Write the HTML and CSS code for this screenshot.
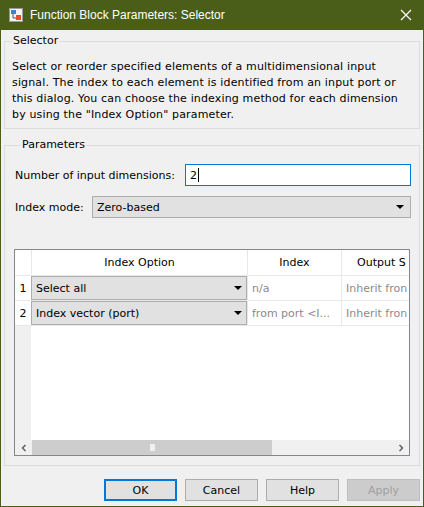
FILE: index.html
```html
<!DOCTYPE html>
<html>
<head>
<meta charset="utf-8">
<link rel="stylesheet" href="styles.css">
</head>
<body>
<div class="window">
  <div class="titlebar">
    <svg class="appicon" width="14" height="14" viewBox="0 0 14 14">
      <rect x="0.5" y="0.5" width="13" height="13" fill="#f4f4f4" stroke="#9a9a9a"/>
      <rect x="2" y="2" width="5" height="4" fill="#3d7fd6"/>
      <path d="M4 6 V10 H8" fill="none" stroke="#555" stroke-width="1"/>
      <rect x="7" y="7" width="5" height="5" fill="#e0502a"/>
    </svg>
    <span class="title">Function Block Parameters: Selector</span>
    <svg class="close" width="12" height="12" viewBox="0 0 12 12">
      <path d="M1 1 L11 11 M11 1 L1 11" stroke="#fff" stroke-width="1.2"/>
    </svg>
  </div>
  <div class="content">
    <fieldset class="group desc">
      <legend>Selector</legend>
      <p>Select or reorder specified elements of a multidimensional input signal. The index to each element is identified from an input port or this dialog. You can choose the indexing method for each dimension by using the "Index Option" parameter.</p>
    </fieldset>
    <fieldset class="group params">
      <legend>Parameters</legend>
      <div class="row r1">
        <label>Number of input dimensions:</label>
        <div class="edit">2<span class="caret"></span></div>
      </div>
      <div class="row r2">
        <label>Index mode:</label>
        <div class="combo wide"><span>Zero-based</span><i class="arrow"></i></div>
      </div>
      <div class="table">
        <div class="thead">
          <div class="corner"></div>
          <div class="th c1">Index Option</div>
          <div class="th c2">Index</div>
          <div class="th c3">Output S</div>
        </div>
        <div class="tr">
          <div class="rn">1</div>
          <div class="td c1"><div class="combo cell"><span>Select all</span><i class="arrow"></i></div></div>
          <div class="td c2 dim">n/a</div>
          <div class="td c3 dim">Inherit fron</div>
        </div>
        <div class="tr">
          <div class="rn">2</div>
          <div class="td c1"><div class="combo cell"><span>Index vector (port)</span><i class="arrow"></i></div></div>
          <div class="td c2 dim">from port &lt;I...</div>
          <div class="td c3 dim">Inherit fron</div>
        </div>
        <div class="tfill">
          <div class="rnfill"></div>
          <div class="blank"></div>
        </div>
        <div class="hscroll">
          <div class="sbtn">
            <svg width="8" height="8" viewBox="0 0 8 8"><path d="M5.5 1 L2.5 4 L5.5 7" fill="none" stroke="#606060" stroke-width="1.5"/></svg>
          </div>
          <div class="thumb"><span class="grip"></span></div>
          <div class="track"></div>
          <div class="sbtn">
            <svg width="8" height="8" viewBox="0 0 8 8"><path d="M2.5 1 L5.5 4 L2.5 7" fill="none" stroke="#606060" stroke-width="1.5"/></svg>
          </div>
        </div>
      </div>
    </fieldset>
    <div class="buttons">
      <button class="btn default">OK</button>
      <button class="btn">Cancel</button>
      <button class="btn">Help</button>
      <button class="btn disabled">Apply</button>
    </div>
  </div>
</div>
</body>
</html>
```

FILE: styles.css
```css
html, body {
  margin: 0;
  padding: 0;
}
body {
  width: 424px;
  height: 507px;
  overflow: hidden;
  font-family: "DejaVu Sans", Tahoma, sans-serif;
  font-size: 11px;
  color: #000;
}
.window {
  box-sizing: border-box;
  width: 424px;
  height: 507px;
  border: 1px solid #4b5e19;
  border-top: none;
  background: #f0f0f0;
  display: flex;
  flex-direction: column;
}
.titlebar {
  height: 30px;
  margin: 0 -1px;
  background: #4b5e19;
  display: flex;
  align-items: center;
  padding-left: 9px;
  flex-shrink: 0;
}
.appicon {
  margin-right: 7px;
}
.title {
  color: #fff;
  font-family: "Liberation Sans", Arial, sans-serif;
  font-size: 12px;
  flex: 1;
}
.close {
  margin-right: 12px;
}
.content {
  flex: 1;
  display: flex;
  flex-direction: column;
  padding: 4px 3px 0 3px;
}
.group {
  margin: 0;
  border: 1px solid #dcdcdc;
  padding: 0;
  min-width: 0;
}
.group legend {
  padding: 0 1px;
  margin-left: 7px;
  line-height: 14px;
}
.desc {
  height: 95px;
  box-sizing: border-box;
}
.desc p {
  margin: 11px 0 0 7px;
  line-height: 16px;
  width: 392px;
  letter-spacing: 0.15px;
}
.params {
  margin-top: 9px;
  height: 328px;
  box-sizing: border-box;
  padding: 0 8px 0 9px;
}
.row {
  display: flex;
  align-items: center;
}
.r1 {
  margin-top: 12px;
  height: 22px;
}
.r2 {
  margin-top: 10px;
  height: 22px;
}
.row label {
  margin-left: 1px;
  white-space: nowrap;
}
.edit {
  margin-left: auto;
  width: 226px;
  height: 22px;
  box-sizing: border-box;
  border: 1px solid #0078d7;
  background: #fff;
  display: flex;
  align-items: center;
  padding-left: 4px;
}
.caret {
  display: inline-block;
  width: 1px;
  height: 14px;
  background: #000;
  margin-left: 1px;
}
.combo {
  box-sizing: border-box;
  background: #e1e1e1;
  border: 1px solid #adadad;
  display: flex;
  align-items: center;
  padding-left: 4px;
  position: relative;
}
.combo span {
  flex: 1;
  white-space: nowrap;
}
.arrow {
  width: 0;
  height: 0;
  border-left: 4px solid transparent;
  border-right: 4px solid transparent;
  border-top: 4px solid #000;
  margin-right: 6px;
}
.wide {
  margin-left: auto;
  width: 319px;
  height: 22px;
}
.table {
  margin-top: 31px;
  width: 396px;
  height: 207px;
  box-sizing: border-box;
  border: 1px solid #828790;
  background: #fff;
  display: flex;
  flex-direction: column;
  overflow: hidden;
}
.thead, .tr {
  display: flex;
  flex-shrink: 0;
}
.thead {
  height: 25px;
  border-bottom: 1px solid #e8e8e8;
}
.corner, .rn, .rnfill {
  width: 16px;
  flex-shrink: 0;
}
.rnfill {
  background: #f0f0f0;
}
.th {
  display: flex;
  align-items: center;
  justify-content: center;
  border-left: 1px solid #e8e8e8;
  box-sizing: border-box;
  white-space: nowrap;
  overflow: hidden;
}
.c1 {
  width: 216px;
  flex-shrink: 0;
}
.c2 {
  width: 94px;
  flex-shrink: 0;
}
.c3 {
  width: 68px;
  flex-shrink: 0;
}
.th.c3 {
  justify-content: flex-start;
  padding-left: 15px;
}
.tr {
  height: 25px;
  border-bottom: 1px solid #e8e8e8;
  box-sizing: border-box;
}
.rn {
  display: flex;
  align-items: center;
  justify-content: center;
  background: #fff;
}
.td {
  box-sizing: border-box;
  display: flex;
  align-items: center;
  white-space: nowrap;
  overflow: hidden;
}
.td.c1 {
  padding: 0;
}
.td.c2, .td.c3 {
  border-left: 1px solid #e8e8e8;
  padding-left: 4px;
}
.dim {
  color: #8a8a8a;
}
.cell {
  width: 216px;
  height: 24px;
}
.cell .arrow {
  margin-right: 4px;
}
.tfill {
  flex: 1;
  display: flex;
}
.blank {
  flex: 1;
  background: #fff;
}
.hscroll {
  height: 15px;
  flex-shrink: 0;
  display: flex;
  background: #f0f0f0;
}
.sbtn {
  width: 17px;
  display: flex;
  align-items: center;
  justify-content: center;
  flex-shrink: 0;
}
.thumb {
  width: 240px;
  background: #cdcdcd;
  display: flex;
  align-items: center;
  justify-content: center;
}
.grip {
  width: 5px;
  height: 7px;
  background: #f0f0f0;
}
.track {
  flex: 1;
}
.buttons {
  display: flex;
  justify-content: flex-end;
  gap: 8px;
  margin-top: 13px;
  padding-right: 0;
}
.btn {
  width: 73px;
  height: 22px;
  box-sizing: border-box;
  background: #e1e1e1;
  border: 1px solid #adadad;
  font-family: "DejaVu Sans", Tahoma, sans-serif;
  font-size: 11px;
  color: #000;
  padding: 0;
  margin: 0;
}
.btn.default {
  border: 2px solid #0078d7;
}
.btn.disabled {
  color: #a0a0a0;
  background: #cccccc;
  border-color: #bfbfbf;
}
```
